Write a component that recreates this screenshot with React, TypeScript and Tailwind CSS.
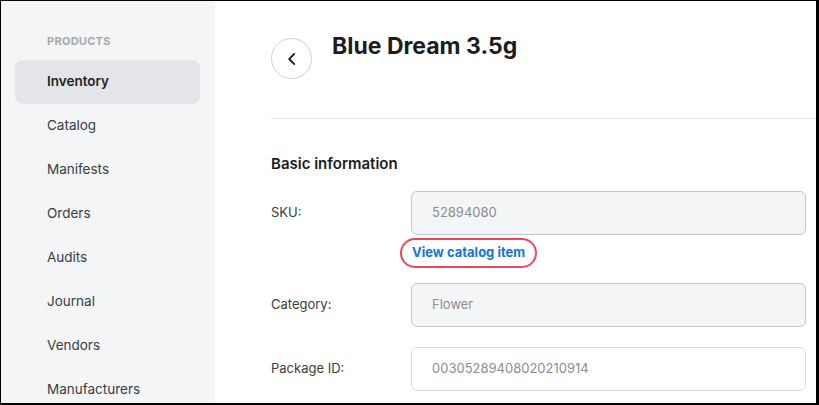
import React from "react";

const navItems = ["Inventory", "Catalog", "Manifests", "Orders", "Audits", "Journal", "Vendors", "Manufacturers"];

function Field({ label, value, disabled }: { label: string; value: string; disabled?: boolean }) {
  return (
    <div className="flex items-center">
      <div className="w-[140px] text-[13px] text-[#3a3d41]">{label}</div>
      <div
        className={
          "flex-1 h-[44px] rounded-md border flex items-center px-5 text-[13px] text-[#8a8d91] " +
          (disabled ? "bg-[#f4f5f7] border-[#c3c6ca]" : "bg-white border-[#d8dadd]")
        }
      >
        {value}
      </div>
    </div>
  );
}

export default function App() {
  return (
    <div
      className="w-[819px] h-[405px] overflow-hidden flex bg-white border-t border-l border-r-[3px] border-b-2 border-black"
      style={{ fontFamily: "Inter, 'Noto Sans', sans-serif" }}
    >
      {/* Sidebar */}
      <aside className="w-[214px] shrink-0 bg-[#f4f5f7] pt-[32px] pl-[14px] pr-[15px]">
        <div className="pl-8 text-[11px] font-bold tracking-wide text-[#a5a8ac] mb-[10px]">PRODUCTS</div>
        <nav className="flex flex-col">
          {navItems.map((item, i) => (
            <a
              key={item}
              className={
                "h-[44px] flex items-center pl-8 rounded-lg text-[13.5px] " +
                (i === 0 ? "bg-[#e3e5e8] font-semibold text-[#222427]" : "text-[#3a3d41]")
              }
            >
              {item}
            </a>
          ))}
        </nav>
      </aside>

      {/* Main */}
      <main className="flex-1 pl-[56px] pt-[37px]">
        <div className="flex items-start gap-5">
          <button className="w-[41px] h-[41px] rounded-full border border-[#cdd0d4] flex items-center justify-center">
            <svg width="18" height="18" viewBox="0 0 16 16" fill="none">
              <path d="M10 3.5 5.5 8l4.5 4.5" stroke="#1b1c1e" strokeWidth="1.6" strokeLinecap="round" strokeLinejoin="round" />
            </svg>
          </button>
          <h1 className="text-[23px] font-bold text-[#1b1c1e] leading-none -mt-[3px]">Blue Dream 3.5g</h1>
        </div>

        <div className="h-px bg-[#e3e5e8] mt-[39px]" />

        <div className="pr-[10px]">
          <h2 className="mt-[37px] text-[15px] font-semibold text-[#1b1c1e] leading-none">Basic information</h2>

          <div className="mt-[20px]">
            <Field label="SKU:" value="52894080" disabled />
            <div className="pl-[129px] mt-[3px]">
              <span className="inline-flex items-center h-[30px] px-[10px] rounded-full border-2 border-[#f0455e] text-[13px] font-bold text-[#1573e0]">
                View catalog item
              </span>
            </div>
          </div>

          <div className="mt-[15px] flex flex-col gap-[20px]">
            <Field label="Category:" value="Flower" disabled />
            <Field label="Package ID:" value="00305289408020210914" />
          </div>
        </div>
      </main>
    </div>
  );
}
